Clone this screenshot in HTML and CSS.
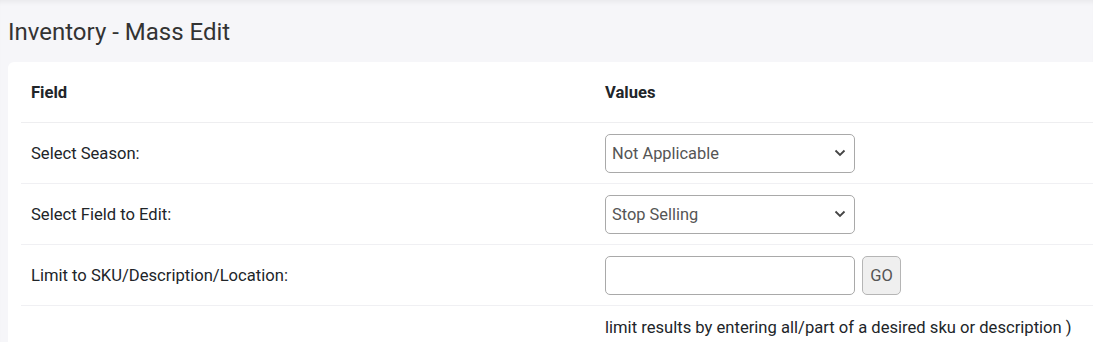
FILE: index.html
```html
<!DOCTYPE html>
<html>
<head>
<meta charset="utf-8">
<link rel="stylesheet" href="styles.css">
</head>
<body>
<div class="page">
  <h1 class="title">Inventory - Mass Edit</h1>
  <div class="card">
    <table class="grid">
      <thead>
        <tr><th class="c1">Field</th><th class="c2">Values</th></tr>
      </thead>
      <tbody>
        <tr>
          <td>Select Season:</td>
          <td>
            <div class="select"><span>Not Applicable</span>
              <svg class="chev" width="12" height="8" viewBox="0 0 12 8"><path d="M1.5 1.5 L6 6 L10.5 1.5" fill="none" stroke="#444" stroke-width="1.8"/></svg>
            </div>
          </td>
        </tr>
        <tr>
          <td>Select Field to Edit:</td>
          <td>
            <div class="select"><span>Stop Selling</span>
              <svg class="chev" width="12" height="8" viewBox="0 0 12 8"><path d="M1.5 1.5 L6 6 L10.5 1.5" fill="none" stroke="#444" stroke-width="1.8"/></svg>
            </div>
          </td>
        </tr>
        <tr>
          <td>Limit to SKU/Description/Location:</td>
          <td>
            <div class="inline"><input class="text" type="text"><button class="go">GO</button></div>
          </td>
        </tr>
        <tr class="last">
          <td></td>
          <td>limit results by entering all/part of a desired sku or description )</td>
        </tr>
      </tbody>
    </table>
  </div>
</div>
</body>
</html>
```

FILE: styles.css
```css
html, body {
  margin: 0;
  padding: 0;
}
body {
  background: #f6f6f9;
  font-family: Roboto, "Liberation Sans", sans-serif;
  color: #212529;
  overflow: hidden;
  width: 1093px;
  height: 342px;
  box-shadow: inset 0 5px 5px -3px rgba(0,0,0,0.06);
}
.page {
  padding: 0 0 0 8px;
}
.title {
  margin: 0;
  padding-top: 18px;
  height: 62px;
  box-sizing: border-box;
  font-size: 24px;
  font-weight: 400;
  line-height: 28px;
  color: #333;
}
.card {
  background: #fff;
  border-radius: 6px 0 0 0;
  width: 1200px;
  padding: 0 13px 20px;
  box-sizing: border-box;
}
.grid {
  border-collapse: collapse;
  width: 1148px;
  font-size: 16.6px;
}
.grid th {
  text-align: left;
  font-weight: 700;
  height: 60px;
  padding: 0 10px;
  vertical-align: middle;
  border-bottom: 1px solid #eeeef0;
}
.grid th.c1, .grid td:first-child {
  width: 554px;
}
.grid td {
  height: 60px;
  padding: 0 10px;
  vertical-align: middle;
  border-bottom: 1px solid #f0f0f3;
}
.grid tr.last td {
  border-bottom: none;
  height: 42px;
}
.select {
  width: 250px;
  height: 39px;
  box-sizing: border-box;
  border: 1px solid #a9a9a9;
  border-radius: 5px;
  display: flex;
  align-items: center;
  justify-content: space-between;
  padding: 0 8px 0 6px;
  font-size: 16.4px;
  color: #555;
  background: #fff;
}
.chev {
  display: block;
}
.inline {
  display: flex;
  gap: 7px;
  align-items: center;
}
.text {
  width: 250px;
  height: 39px;
  box-sizing: border-box;
  border: 1px solid #a9a9a9;
  border-radius: 5px;
  margin: 0;
  font-family: inherit;
}
.go {
  width: 39px;
  height: 39px;
  box-sizing: border-box;
  border: 1px solid #b5b5b5;
  border-radius: 5px;
  background: #efefef;
  color: #555;
  font-family: inherit;
  font-size: 16.5px;
  padding: 0;
  margin: 0;
}
```
